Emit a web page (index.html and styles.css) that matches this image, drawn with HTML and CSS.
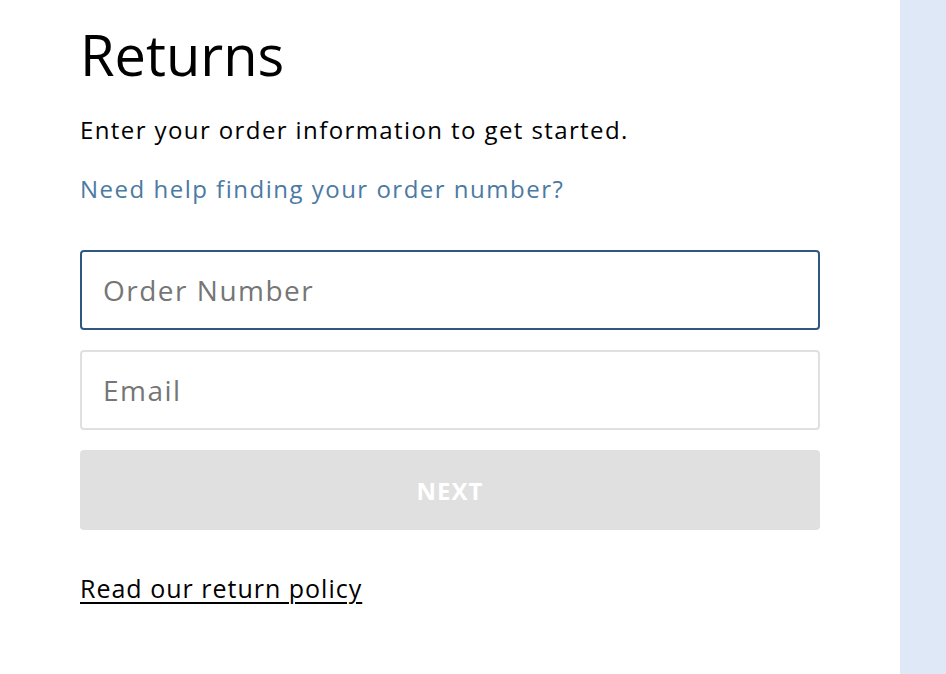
FILE: index.html
```html
<!DOCTYPE html>
<html lang="en">
<head>
    <meta charset="UTF-8">
    <meta name="viewport" content="width=device-width, initial-scale=1.0">
    <title>Returns</title>
    <link rel="stylesheet" href="styles.css">
</head>
<body>
    <div class="page">
        <div class="main">
            <h1 class="title">Returns</h1>
            <p class="intro">Enter your order information to get started.</p>
            <a class="help-link" href="#">Need help finding your order number?</a>
            <form class="returns-form">
                <input type="text" class="field focused" placeholder="Order Number">
                <input type="email" class="field" placeholder="Email">
                <button type="button" class="next-btn" disabled>NEXT</button>
            </form>
            <a class="policy-link" href="#">Read our return policy</a>
        </div>
        <div class="side"></div>
    </div>
</body>
</html>
```

FILE: styles.css
```css
html, body {
    margin: 0;
    height: 100%;
}
body {
    font-family: "Open Sans", "Noto Sans", sans-serif;
    background: #fff;
    color: #000;
}
.page {
    display: grid;
    grid-template-columns: 1fr 46px;
    min-height: 100%;
}
.main {
    padding: 19px 80px 0 80px;
}
.side {
    background: #dfe8f6;
}
.title {
    font-size: 56px;
    font-weight: 500;
    line-height: 70px;
    margin: 0 0 26px 0;
}
.intro {
    font-size: 24px;
    line-height: 30px;
    letter-spacing: 1.4px;
    margin: 0 0 29px 0;
}
.help-link {
    display: block;
    font-size: 24px;
    line-height: 30px;
    letter-spacing: 1.5px;
    color: #4b7aa3;
    text-decoration: none;
}
.returns-form {
    display: flex;
    flex-direction: column;
    gap: 20px;
    margin-top: 46px;
}
.field {
    box-sizing: border-box;
    height: 80px;
    width: 100%;
    padding: 0 21px;
    font-family: inherit;
    font-size: 28px;
    letter-spacing: 1.5px;
    border: 2px solid #e0e0e0;
    border-radius: 4px;
    outline: none;
    color: #333;
}
.field::placeholder {
    color: #767676;
}
.field.focused {
    border-color: #2e5782;
}
.next-btn {
    height: 80px;
    border: none;
    border-radius: 4px;
    background: #e0e0e0;
    color: #fff;
    font-family: inherit;
    font-size: 24px;
    font-weight: 700;
    letter-spacing: 1px;
}
.policy-link {
    display: inline-block;
    margin-top: 41px;
    font-size: 25px;
    letter-spacing: 1px;
    color: #000;
    text-decoration: underline;
    text-decoration-thickness: 2px;
    text-underline-offset: 4px;
}
```
